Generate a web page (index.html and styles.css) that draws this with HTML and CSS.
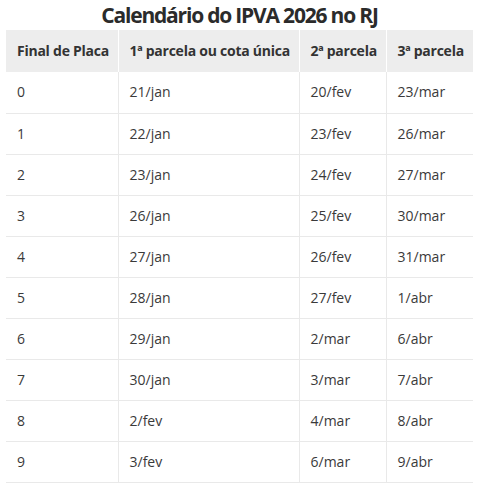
FILE: index.html
```html
<!DOCTYPE html>
<html lang="pt-BR">
<head>
<meta charset="utf-8">
<link rel="stylesheet" href="styles.css">
</head>
<body>
<div class="wrap">
  <h2 class="title">Calendário do IPVA 2026 no RJ</h2>
  <table class="ipva">
    <colgroup>
      <col class="c1"><col class="c2"><col class="c3"><col class="c4">
    </colgroup>
    <thead>
      <tr><th>Final de Placa</th><th>1ª parcela ou cota única</th><th>2ª parcela</th><th>3ª parcela</th></tr>
    </thead>
    <tbody>
      <tr><td>0</td><td>21/jan</td><td>20/fev</td><td>23/mar</td></tr>
      <tr><td>1</td><td>22/jan</td><td>23/fev</td><td>26/mar</td></tr>
      <tr><td>2</td><td>23/jan</td><td>24/fev</td><td>27/mar</td></tr>
      <tr><td>3</td><td>26/jan</td><td>25/fev</td><td>30/mar</td></tr>
      <tr><td>4</td><td>27/jan</td><td>26/fev</td><td>31/mar</td></tr>
      <tr><td>5</td><td>28/jan</td><td>27/fev</td><td>1/abr</td></tr>
      <tr><td>6</td><td>29/jan</td><td>2/mar</td><td>6/abr</td></tr>
      <tr><td>7</td><td>30/jan</td><td>3/mar</td><td>7/abr</td></tr>
      <tr><td>8</td><td>2/fev</td><td>4/mar</td><td>8/abr</td></tr>
      <tr><td>9</td><td>3/fev</td><td>6/mar</td><td>9/abr</td></tr>
    </tbody>
  </table>
</div>
</body>
</html>
```
FILE: styles.css
```css
html, body {
  margin: 0;
  padding: 0;
  background: #fff;
}
body {
  font-family: "Open Sans", "Liberation Sans", sans-serif;
  color: #333;
}
.wrap {
  width: 467px;
  margin-left: 6px;
}
.title {
  margin: 0;
  height: 30px;
  font-size: 21px;
  line-height: 30px;
  font-weight: 700;
  text-align: center;
  color: #2b2b2b;
  letter-spacing: -1.2px;
}
.ipva {
  width: 467px;
  border-collapse: collapse;
  table-layout: fixed;
  font-size: 14px;
}
.c1 { width: 112px; }
.c2 { width: 181px; }
.c3 { width: 87px; }
.c4 { width: 87px; }
.ipva th {
  background: #ededed;
  font-weight: 700;
  text-align: left;
  height: 42px;
  padding: 0 11px;
  line-height: 20px;
  border-right: 1px solid #fff;
  box-sizing: border-box;
  white-space: nowrap;
  letter-spacing: -0.25px;
}
.ipva td {
  height: 41px;
  padding: 0 11px;
  line-height: 20px;
  border-bottom: 1px solid #e9e9e9;
  border-right: 1px solid #e9e9e9;
  box-sizing: border-box;
  color: #3a3a3a;
}
.ipva th:last-child,
.ipva td:last-child {
  border-right: none;
}
```
